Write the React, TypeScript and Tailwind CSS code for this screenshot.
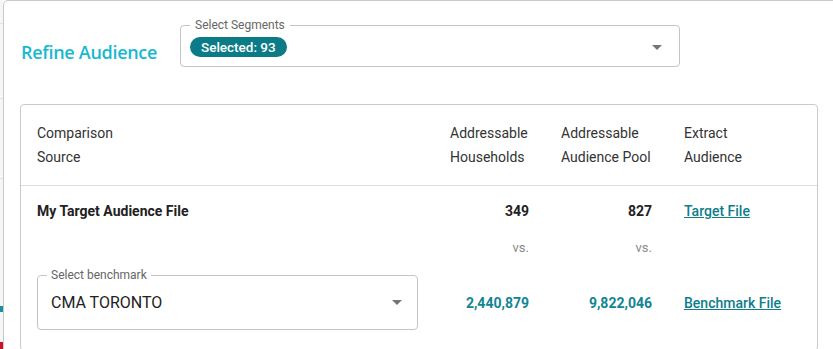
import React from "react";

function DropArrow({ className }: { className?: string }) {
  return (
    <svg viewBox="0 0 24 24" className={className} fill="currentColor">
      <path d="M7 10l5 5 5-5z" />
    </svg>
  );
}

export default function App() {
  return (
    <div className="w-[833px] h-[349px] overflow-hidden bg-white flex font-['Roboto',sans-serif] text-[#222]">
      {/* page behind the dialog */}
      <div className="w-[3px] shrink-0 flex flex-col bg-[#f5f6f8]">
        <div className="h-[24px] border-b border-[#e2e2e2]" />
        <div className="h-[75px] border-b border-[#e2e2e2]" />
        <div className="h-[80px] border-b border-[#e2e2e2]" />
        <div className="h-[127px]" />
        <div className="h-[6px] bg-[#1a8fa0]" />
        <div className="h-[30px]" />
        <div className="flex-1 bg-[#d0102a]" />
      </div>

      {/* dialog */}
      <div className="w-[860px] shrink-0 border-l border-t border-[#cacaca] rounded-tl-[5px] bg-white">
        <div className="flex items-start pt-[24px] pl-[17px]">
          <div className="w-[159px] pt-[16px] text-[18px] leading-[22px] font-semibold tracking-[-0.3px] text-[#17b8d0] font-['Open_Sans',sans-serif]">
            Refine Audience
          </div>
          <div className="relative w-[500px] h-[42px] border border-[#c4c4c4] rounded-[4px] flex items-center pl-[9px]">
            <span className="absolute -top-[9px] left-[9px] bg-white px-[5px] text-[12px] leading-[16px] text-[#666]">
              Select Segments
            </span>
            <span className="mt-[2px] h-[20px] px-[11px] rounded-full bg-[#0b7c87] text-white text-[13.5px] font-medium leading-[20px]">
              Selected: 93
            </span>
            <DropArrow className="absolute right-[10px] top-[9px] w-[24px] h-[24px] text-[#757575]" />
          </div>
        </div>

        <div className="ml-[16px] mt-[37px] w-[798px] border border-[#cacaca] rounded-[4px] text-[14px]">
          <div className="grid grid-cols-[413px_111px_123px_1fr] border-b border-[#dedede] leading-[24px] text-[#333]">
            <div className="px-[16px] py-[16px]">
              Comparison
              <br />
              Source
            </div>
            <div className="pl-[16px] py-[16px]">
              Addressable
              <br />
              Households
            </div>
            <div className="pl-[16px] py-[16px]">
              Addressable
              <br />
              Audience Pool
            </div>
            <div className="pl-[16px] py-[16px]">
              Extract
              <br />
              Audience
            </div>
          </div>

          <div className="grid grid-cols-[413px_111px_123px_1fr] items-center pt-[15px] leading-[20px]">
            <div className="px-[16px] font-bold text-[#222]">My Target Audience File</div>
            <div className="pr-[16px] text-right font-bold">349</div>
            <div className="pr-[16px] text-right font-bold">827</div>
            <div className="pl-[16px]">
              <a className="underline font-medium text-[#0e7d8b]" href="#">Target File</a>
            </div>
          </div>

          <div className="grid grid-cols-[413px_111px_123px_1fr] pt-[17px] leading-[20px] text-[13px] text-[#8a8a8a]">
            <div />
            <div className="pr-[16px] text-right">vs.</div>
            <div className="pr-[16px] text-right">vs.</div>
            <div />
          </div>

          <div className="grid grid-cols-[413px_111px_123px_1fr] items-center pt-[17px] pb-[20px] leading-[20px]">
            <div className="px-[16px]">
              <div className="relative h-[55px] border border-[#c4c4c4] rounded-[4px] flex items-center pl-[13px]">
                <span className="absolute -top-[9px] left-[9px] bg-white px-[4px] text-[12px] leading-[16px] text-[#666]">
                  Select benchmark
                </span>
                <span className="text-[16px] text-[#222]">CMA TORONTO</span>
                <DropArrow className="absolute right-[8px] top-[14px] w-[24px] h-[24px] text-[#757575]" />
              </div>
            </div>
            <div className="pr-[16px] text-right font-bold text-[#128592]">2,440,879</div>
            <div className="pr-[16px] text-right font-bold text-[#128592]">9,822,046</div>
            <div className="pl-[16px]">
              <a className="underline font-medium text-[#0e7d8b]" href="#">Benchmark File</a>
            </div>
          </div>
        </div>
      </div>
    </div>
  );
}
